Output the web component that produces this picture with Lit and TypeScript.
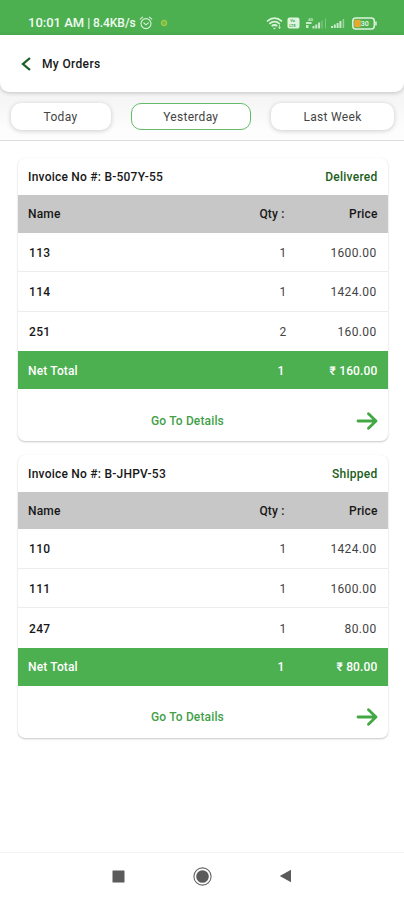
import { LitElement, html, css } from "lit";
import { customElement, property } from "lit/decorators.js";

interface Line { name: string; qty: number; price: string; }
interface Order { invoice: string; status: string; lines: Line[]; qty: number; total: string; }

const ORDERS: Order[] = [
  {
    invoice: "B-507Y-55", status: "Delivered", qty: 1, total: "160.00",
    lines: [
      { name: "113", qty: 1, price: "1600.00" },
      { name: "114", qty: 1, price: "1424.00" },
      { name: "251", qty: 2, price: "160.00" },
    ],
  },
  {
    invoice: "B-JHPV-53", status: "Shipped", qty: 1, total: "80.00",
    lines: [
      { name: "110", qty: 1, price: "1424.00" },
      { name: "111", qty: 1, price: "1600.00" },
      { name: "247", qty: 1, price: "80.00" },
    ],
  },
];

@customElement("status-bar")
class StatusBar extends LitElement {
  static styles = css`
    :host { display: flex; align-items: flex-end; height: 35px; box-sizing: border-box; padding: 0 26px 4px 28px; background: #4caf50; color: #f0fbf0; }
    .clock { font-size: 13px; line-height: 16px; font-weight: 500; white-space: pre; }
    .rate { font-size: 12px; line-height: 16px; font-weight: 500; white-space: pre; letter-spacing: -.05px; }
    svg { display: block; flex: none; }
    .alarm { margin: 0 0 1px 3px; }
    .dot { margin: 0 0 4px 7px; }
    .icons { margin-left: auto; display: flex; align-items: center; height: 16px; }
    .nr { margin-left: 4px; }
    .sig { margin-left: 5px; }
    .sig2 { margin-left: 4px; }
    .battery { margin-left: 7px; }
    .tiny { font: 700 4px Roboto, sans-serif; }
    .level { font: 500 7px Roboto, sans-serif; }
  `;
  render() {
    return html`
      <span class="clock">10:01 AM</span><span class="rate"> | 8.4KB/s</span>
      <svg class="alarm" width="14" height="14" viewBox="0 0 14 14" fill="none" stroke="#d9f3da" stroke-width="1.1" stroke-linecap="round">
        <circle cx="7" cy="7.6" r="5" /><path d="M1.2 3.2 3.6 1.2M12.8 3.2 10.4 1.2M4.8 6.8 7 8.8 9.4 6.8" />
      </svg>
      <svg class="dot" width="8" height="8" viewBox="0 0 8 8"><circle cx="4" cy="4" r="2.6" fill="#75bd47" stroke="#a4c94b" stroke-width="1.2" /></svg>
      <div class="icons">
        <svg width="17" height="13" viewBox="0 0 17 13" fill="none" stroke="#d9f3da" stroke-width="1.7">
          <path d="M1 4.3Q8.5-2 16 4.3M3.3 6.8Q8.5 2.5 13.7 6.8M5.6 9.2Q8.5 6.8 11.4 9.2" /><path d="M7 10.8h3L8.5 12.4z" fill="#d9f3da" stroke="none" />
          <path d="M13.5 7.5v4M12.3 10.2l1.2 1.4 1.2-1.4" stroke-width=".8" />
        </svg>
        <svg class="nr" width="13" height="12" viewBox="0 0 13 12">
          <rect x=".5" y=".5" width="12" height="11" rx="2" fill="#dff5e0" />
          <text class="tiny" x="3.2" y="5.2" fill="#4caf50">Vo</text><text class="tiny" x="2.2" y="9.8" fill="#4caf50">LTE</text>
        </svg>
        <svg class="sig" width="22" height="13" viewBox="0 0 22 13" fill="#c8ecc9">
          <text class="tiny" x="3" y="4">4G</text><path d="M1 5h5.5v2H1zM1 8h2.5v3H1zM7.5 9h2v2.5h-2zM10.3 7.5h2v4h-2zM13.1 5.5h2v6h-2z" /><path d="M16.5 3.5h1v8h-1zM20 1.5h.8v10H20z" opacity=".5" />
        </svg>
        <svg class="sig2" width="14" height="12" viewBox="0 0 14 12" fill="#c8ecc9">
          <path d="M0 9h2v2H0zM2.8 7.5h2V11h-2zM5.6 6h2v5h-2zM8.4 4h2v7h-2z" /><path d="M11.6 2h1.6v9h-1.6z" opacity=".6" />
        </svg>
        <svg class="battery" width="26" height="13" viewBox="0 0 26 13">
          <rect x=".8" y="1" width="21.5" height="11" rx="3" fill="none" stroke="#dcf4dc" stroke-width="1.5" />
          <path d="M23.2 4.5h1.5v4h-1.5z" fill="#dcf4dc" /><rect x="2.3" y="2.7" width="6.5" height="7.6" rx="1" fill="#e5a92f" />
          <text class="level" x="8.8" y="9.1" fill="#eaf8e8">30</text>
        </svg>
      </div>`;
  }
}

@customElement("order-card")
class OrderCard extends LitElement {
  @property({ attribute: false }) order!: Order;
  static styles = css`
    :host { display: block; box-sizing: border-box; height: 283px; border-radius: 7px; background: #fff; overflow: hidden; box-shadow: 0 1px 2px rgba(0, 0, 0, .22), 0 0 1px rgba(0, 0, 0, .06); font-size: 12px; color: #171717; }
    .top, .grid, .more { display: grid; align-items: center; box-sizing: border-box; padding: 0 10.5px; }
    .top { height: 37px; grid-template-columns: 1fr auto; font-weight: 500; letter-spacing: .23px; padding-top: 1px; }
    .status { color: #1b5e20; letter-spacing: .25px; }
    .grid { grid-template-columns: 1fr 70px 93px; height: 39.5px; letter-spacing: .15px; padding-top: 1px; }
    .grid > :nth-child(n + 2) { text-align: right; }
    .head { height: 37.5px; background: #c7c7c7; font-weight: 500; }
    .line { grid-template-columns: 1fr 70px 90px; border-bottom: 1px solid #ececec; padding: 2px 11.5px 0; color: #444; letter-spacing: .35px; }
    .line:nth-child(5) { border-bottom: 0; }
    .id { color: #171717; font-weight: 500; }
    .net { height: 38px; background: #4caf50; color: #fff; font-weight: 500; }
    .more { height: 63px; grid-template-columns: 1fr 22px; color: #43a047; font-weight: 500; letter-spacing: .15px; }
    .link { padding-left: 123px; }
    svg { display: block; }
  `;
  render() {
    const o = this.order;
    return html`
      <div class="top"><span>Invoice No #: ${o.invoice}</span><span class="status">${o.status}</span></div>
      <div class="grid head"><span>Name</span><span>Qty :</span><span>Price</span></div>
      ${o.lines.map((l) => html`<div class="grid line"><span class="id">${l.name}</span><span>${l.qty}</span><span>${l.price}</span></div>`)}
      <div class="grid net"><span>Net Total</span><span>${o.qty}</span><span>₹ ${o.total}</span></div>
      <div class="more"><span class="link">Go To Details</span>
        <svg width="22" height="18" viewBox="0 0 22 18" fill="none" stroke="#43a843" stroke-width="2.8" stroke-linecap="round" stroke-linejoin="round"><path d="M2 9H20M12.5 1.8 20 9 12.5 16.2" /></svg>
      </div>`;
  }
}

@customElement("app-root")
class AppRoot extends LitElement {
  static styles = css`
    :host { display: flex; flex-direction: column; height: 900px; width: 404px; overflow: hidden; background: #fff; font-family: Roboto, sans-serif; }
    .strip { flex: none; background: linear-gradient(#f3f3f3 55px, #fdfdfd 95px); height: 106px; box-sizing: border-box; border-bottom: 1px solid #dedede; }
    .title { height: 57px; box-sizing: border-box; display: flex; align-items: center; gap: 11px; padding-left: 21px; background: #fff; border-radius: 0 0 9px 9px; box-shadow: 0 1px 4px rgba(0, 0, 0, .2); font-size: 12px; font-weight: 500; letter-spacing: .35px; color: #171717; }
    .tabs { display: flex; justify-content: space-between; padding: 11px 10px 0 10.5px; }
    .tab { display: flex; align-items: center; justify-content: center; box-sizing: border-box; height: 27px; width: 100px; border-radius: 10px; background: #fff; box-shadow: 0 1px 5px rgba(0, 0, 0, .2); font-size: 12px; letter-spacing: .3px; color: #444; padding-top: 1px; }
    .mid { width: 120px; border: 1px solid #66bb6a; box-shadow: none; }
    .last { width: 123px; }
    .orders { flex: 1; display: flex; flex-direction: column; gap: 13.5px; padding: 17px 16px 0 17.5px; }
    .nav { flex: none; height: 48px; box-sizing: border-box; border-top: 1px solid #f4f4f4; display: flex; align-items: center; padding: 0 0 1px 112px; gap: 68px; }
    .back { margin-left: -1.5px; }
    svg { display: block; flex: none; }
  `;
  render() {
    return html`
      <status-bar></status-bar>
      <div class="strip">
        <div class="title">
          <svg width="10" height="14" viewBox="0 0 10 14" fill="none" stroke="#1b5e20" stroke-width="2.3"><path d="M9 1 2 7 9 13" /></svg>
          <span>My Orders</span>
        </div>
        <div class="tabs"><div class="tab">Today</div><div class="tab mid">Yesterday</div><div class="tab last">Last Week</div></div>
      </div>
      <div class="orders">${ORDERS.map((o) => html`<order-card .order=${o}></order-card>`)}</div>
      <div class="nav">
        <svg width="13" height="13" viewBox="0 0 13 13"><rect x=".5" y=".5" width="12" height="12" rx=".5" fill="#5b5b5b" /></svg>
        <svg width="19" height="19" viewBox="0 0 19 19"><circle cx="9.5" cy="9.5" r="8.6" fill="none" stroke="#666" stroke-width="1.1" /><circle cx="9.5" cy="9.5" r="6.3" fill="#5b5b5b" /></svg>
        <svg class="back" width="13" height="14" viewBox="0 0 13 14"><path d="M.8 7 12 .8V13.2z" fill="#5b5b5b" /></svg>
      </div>`;
  }
}
